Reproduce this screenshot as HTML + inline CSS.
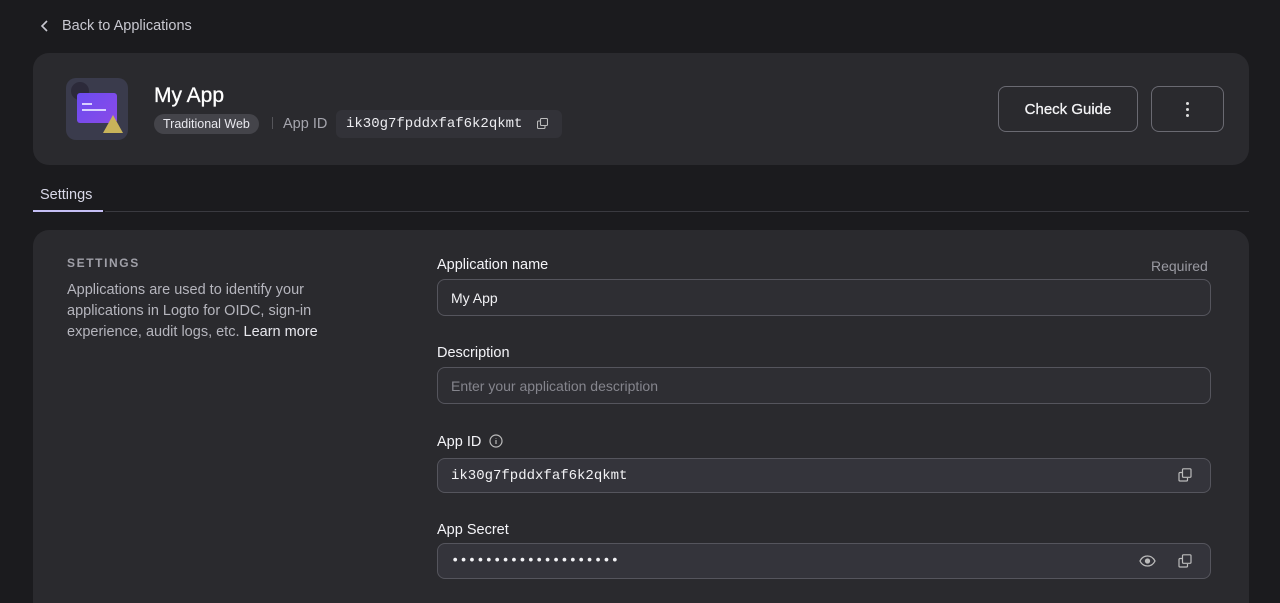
<!DOCTYPE html>
<html><head><style>
*{box-sizing:border-box;margin:0;padding:0}
html,body{width:1280px;height:603px;overflow:hidden}
body{background:#1b1b1e;font-family:"Liberation Sans",sans-serif;color:#f2f2f5;position:relative}
.mono{font-family:"Liberation Mono",monospace}
.abs{position:absolute}
.card{position:absolute;background:#2a2a2e;border-radius:16px}
.input{position:absolute;left:437px;width:774px;height:37px;border:1px solid #55555d;border-radius:8px;background:#2e2e33;font-size:14px;padding:0 13px;display:flex;align-items:center}
.ro{background:#34343b}
.label{position:absolute;left:437px;font-size:14.5px;color:#f4f4f8}
</style></head><body>
<div class="abs" style="left:40px;top:18px;font-size:14.5px;color:#c8c8d0;display:flex;align-items:center;gap:12px">
<svg width="10" height="12" viewBox="0 0 10 12"><path d="M7 1L2 6l5 5" stroke="#c8c8d0" stroke-width="1.6" fill="none"/></svg>Back to Applications</div>

<div class="card" style="left:33px;top:53px;width:1216px;height:112px"></div>
<div class="abs" style="left:66px;top:78px;width:62px;height:62px;border-radius:10px;background:#3a3b4c">
<div class="abs" style="left:5px;top:4px;width:18px;height:18px;border-radius:50%;background:#2c2a3a"></div>
<div class="abs" style="left:11px;top:15px;width:40px;height:30px;border-radius:3px;background:linear-gradient(135deg,#6b4cf0,#8a4ae8)"></div>
<div class="abs" style="left:16px;top:25px;width:10px;height:2px;background:#d8d0ff"></div>
<div class="abs" style="left:16px;top:31px;width:24px;height:2px;background:#d8d0ff"></div>
<svg class="abs" style="left:36px;top:36px" width="22" height="20"><path d="M11 1L21 19H1z" fill="#c8b35a"/></svg>
</div>
<div class="abs" style="left:154px;top:84px;font-size:21px;color:#fff;-webkit-text-stroke:0.3px #fff">My App</div>
<div class="abs" style="left:154px;top:114px;height:20px;padding:0 9px;border-radius:10px;background:#44444a;font-size:12.5px;line-height:20px;color:#e8e8ee">Traditional Web</div>
<div class="abs" style="left:272px;top:117px;width:1px;height:12px;background:#55555a"></div>
<div class="abs" style="left:283px;top:116px;font-size:14.5px;color:#a5a5ad">App ID</div>
<div class="abs mono" style="left:336px;top:110px;width:226px;height:28px;border-radius:6px;background:#323238;font-size:14px;line-height:28px;padding-left:10px;color:#ececf0">ik30g7fpddxfaf6k2qkmt</div>
<svg class="abs" style="left:537px;top:118px" width="11" height="11" viewBox="0 0 11 11" fill="none" stroke="#bbb" stroke-width="1.1"><rect x="3.5" y="0.5" width="7" height="7" rx="1"/><path d="M3 3H1.5a1 1 0 0 0-1 1v5.5a1 1 0 0 0 1 1H7a1 1 0 0 0 1-1V8"/></svg>
<div class="abs" style="left:998px;top:86px;width:140px;height:46px;border:1px solid #6a6a72;border-radius:8px;font-size:15px;-webkit-text-stroke:0.25px #fff;display:flex;align-items:center;justify-content:center">Check Guide</div>
<div class="abs" style="left:1151px;top:86px;width:73px;height:46px;border:1px solid #6a6a72;border-radius:8px;display:flex;flex-direction:column;align-items:center;justify-content:center;gap:3px">
<i style="width:3px;height:3px;border-radius:50%;background:#ddd"></i><i style="width:3px;height:3px;border-radius:50%;background:#ddd"></i><i style="width:3px;height:3px;border-radius:50%;background:#ddd"></i></div>

<div class="abs" style="left:40px;top:187px;font-size:14.5px;color:#d8d8e8">Settings</div>
<div class="abs" style="left:33px;top:210px;width:70px;height:2px;background:#c5bff5"></div>
<div class="abs" style="left:105px;top:211px;width:1144px;height:1px;background:#3a3a40"></div>

<div class="card" style="left:33px;top:230px;width:1216px;height:400px"></div>
<div class="abs" style="left:67px;top:256px;font-size:12px;font-weight:bold;letter-spacing:1.6px;color:#a0a0a8">SETTINGS</div>
<div class="abs" style="left:67px;top:280px;width:290px;font-size:14.5px;line-height:21px;color:#b5b5bd">Applications are used to identify your applications in Logto for OIDC, sign-in experience, audit logs, etc. <span style="color:#e8e8ee">Learn more</span></div>

<div class="label" style="top:257px">Application name</div>
<div class="abs" style="left:1151px;top:258px;font-size:14px;color:#9a9aa2">Required</div>
<div class="input" style="top:279px">My App</div>
<div class="label" style="top:345px">Description</div>
<div class="input" style="top:367px;color:#85858d">Enter your application description</div>
<div class="label" style="top:434px">App ID <svg style="vertical-align:-2px;margin-left:4px" width="14" height="14" viewBox="0 0 14 14" fill="none" stroke="#bbb" stroke-width="1.2"><circle cx="7" cy="7" r="6"/><path d="M7 6v4M7 4v.5"/></svg></div>
<div class="input ro mono" style="top:458px;height:35px">ik30g7fpddxfaf6k2qkmt</div>
<div class="label" style="top:522px">App Secret</div>
<div class="input ro mono" style="top:543px;height:36px;letter-spacing:0px">••••••••••••••••••••</div>
<svg class="abs" style="left:1178px;top:468px" width="14" height="14" viewBox="0 0 14 14" fill="none" stroke="#bbb" stroke-width="1.2"><rect x="4.5" y="0.8" width="8.5" height="8.5" rx="1"/><path d="M4 4.5H2a1 1 0 0 0-1 1V12a1 1 0 0 0 1 1h6.5a1 1 0 0 0 1-1V10"/></svg>
<svg class="abs" style="left:1178px;top:554px" width="14" height="14" viewBox="0 0 14 14" fill="none" stroke="#bbb" stroke-width="1.2"><rect x="4.5" y="0.8" width="8.5" height="8.5" rx="1"/><path d="M4 4.5H2a1 1 0 0 0-1 1V12a1 1 0 0 0 1 1h6.5a1 1 0 0 0 1-1V10"/></svg>
<svg class="abs" style="left:1139px;top:555px" width="17" height="12" viewBox="0 0 17 12" fill="none" stroke="#bbb" stroke-width="1.3"><path d="M1 6C3 2 6 1 8.5 1S14 2 16 6c-2 4-5 5-7.5 5S3 10 1 6z"/><circle cx="8.5" cy="6" r="2" fill="#bbb"/></svg>
</body></html>
